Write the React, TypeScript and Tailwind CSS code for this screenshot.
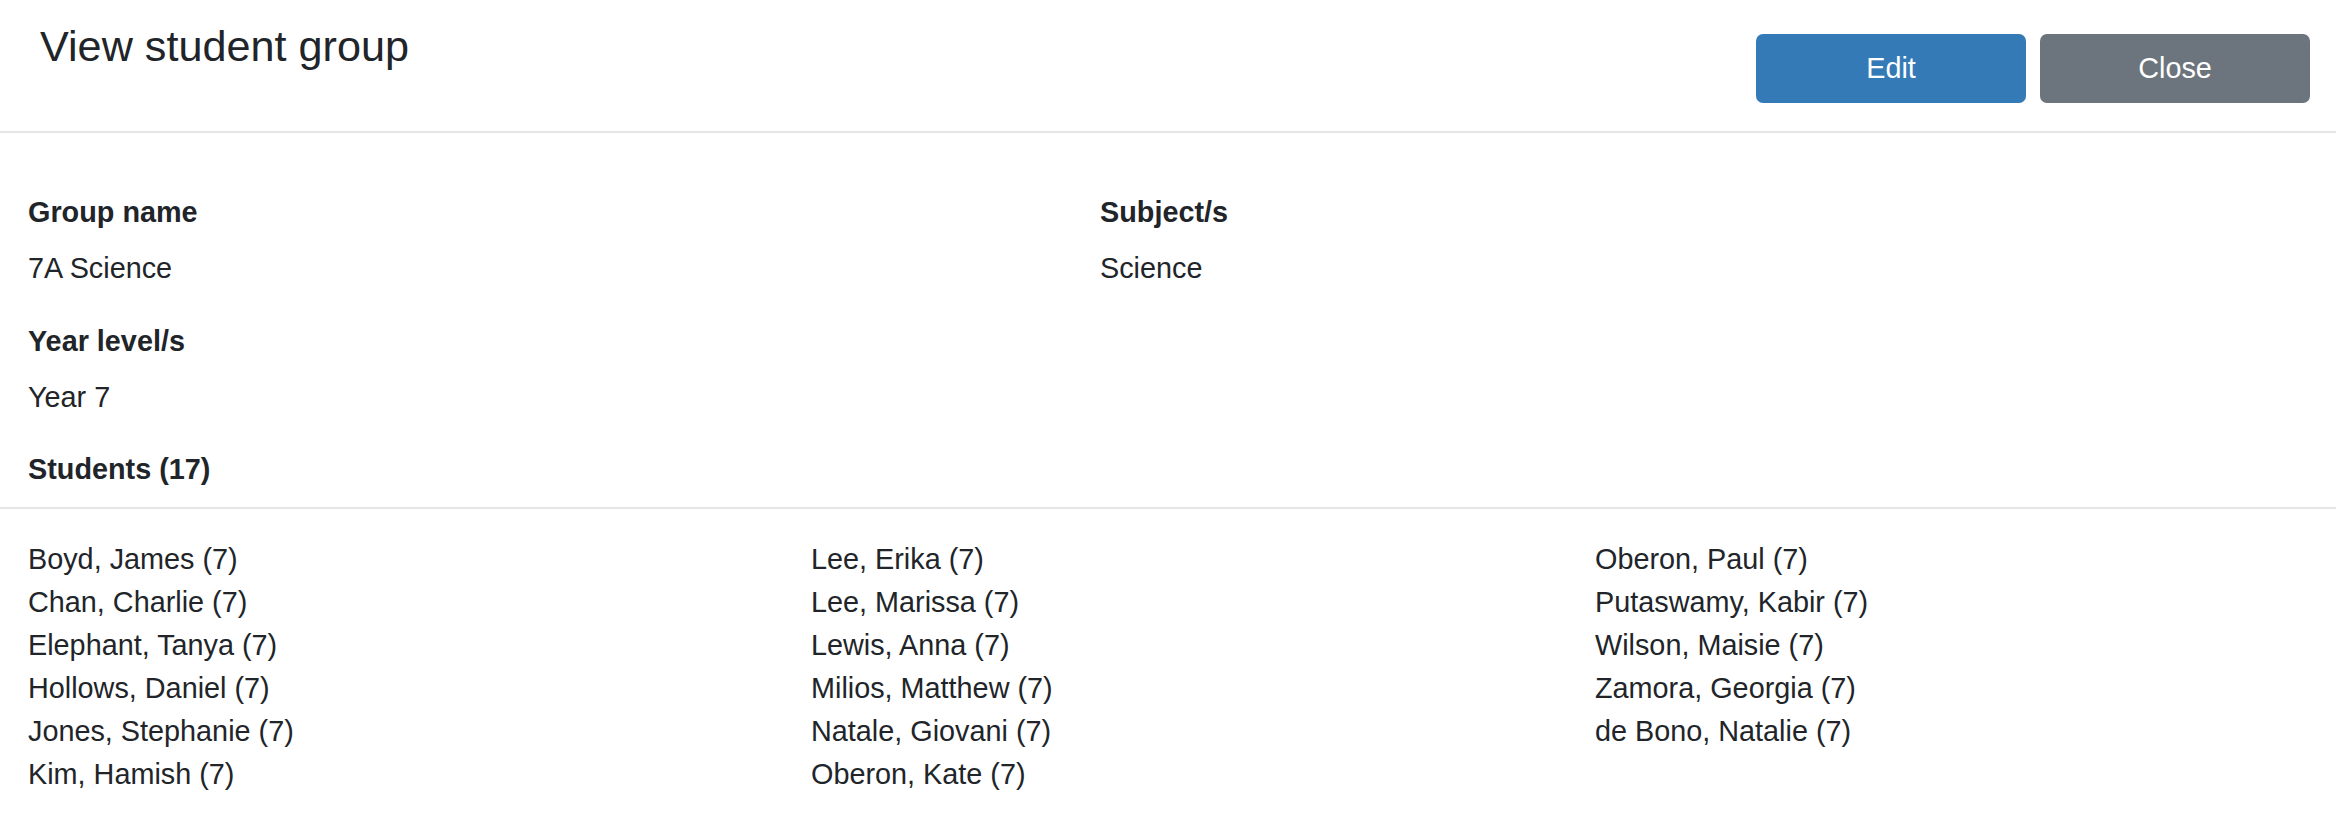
const students: string[][] = [
  [
    "Boyd, James (7)",
    "Chan, Charlie (7)",
    "Elephant, Tanya (7)",
    "Hollows, Daniel (7)",
    "Jones, Stephanie (7)",
    "Kim, Hamish (7)",
  ],
  [
    "Lee, Erika (7)",
    "Lee, Marissa (7)",
    "Lewis, Anna (7)",
    "Milios, Matthew (7)",
    "Natale, Giovani (7)",
    "Oberon, Kate (7)",
  ],
  [
    "Oberon, Paul (7)",
    "Putaswamy, Kabir (7)",
    "Wilson, Maisie (7)",
    "Zamora, Georgia (7)",
    "de Bono, Natalie (7)",
  ],
];

function Field({ label, value }: { label: string; value: string }) {
  return (
    <div>
      <p className="font-bold">{label}</p>
      <p className="mt-[14px]">{value}</p>
    </div>
  );
}

export default function App() {
  return (
    <div className="h-screen overflow-hidden bg-white font-['Liberation_Sans',Arial,sans-serif] text-[28.8px] leading-[42px] text-[#212529]">
      {/* Header */}
      <header className="flex h-[133px] items-start justify-between border-b-2 border-[#e5e5e5]">
        <h4 className="pl-[40px] pt-[20px] text-[43.2px] leading-[52px]">
          View student group
        </h4>
        <div className="mr-[26px] mt-[34px] flex gap-[14px]">
          <button className="flex h-[69px] w-[270px] items-center justify-center rounded-[7px] bg-[#337ab7] leading-none text-white">
            Edit
          </button>
          <button className="flex h-[69px] w-[270px] items-center justify-center rounded-[7px] bg-[#6c757d] leading-none text-white">
            Close
          </button>
        </div>
      </header>

      {/* Details */}
      <section className="grid grid-cols-[1072px_1fr] px-[28px] pt-[58px]">
        <Field label="Group name" value="7A Science" />
        <Field label="Subject/s" value="Science" />
        <div className="mt-[31px]">
          <Field label="Year level/s" value="Year 7" />
        </div>
      </section>

      <p className="mt-[30px] px-[28px] pb-[17px] font-bold">Students (17)</p>

      {/* Student list */}
      <section className="grid grid-cols-[783px_784px_1fr] border-t-2 border-[#e5e5e5] px-[28px] pt-[29px] leading-[43px]">
        {students.map((col, i) => (
          <ul key={i}>
            {col.map((name) => (
              <li key={name}>{name}</li>
            ))}
          </ul>
        ))}
      </section>
    </div>
  );
}
